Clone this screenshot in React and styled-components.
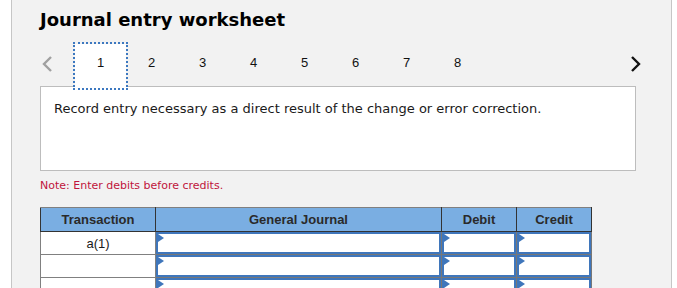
import React from 'react'
import styled, { createGlobalStyle } from 'styled-components'

const GlobalStyle = createGlobalStyle`
  body {
    margin: 0;
    background: #fff;
    overflow: hidden;
  }
`

const Panel = styled.div`
  margin-left: 11px;
  width: 661px;
  min-height: 100vh;
  background: #f2f2f2;
  border-left: 1px solid #c6c6c6;
  border-right: 1px solid #c6c6c6;
  padding: 9px 29px 0 28px;
  box-sizing: border-box;
  display: flex;
  flex-direction: column;
`

const Title = styled.h1`
  margin: 0;
  font-family: "DejaVu Sans", Verdana, sans-serif;
  font-size: 18px;
  line-height: 22px;
  font-weight: bold;
  color: #000;
`

const TabRow = styled.div`
  display: flex;
  align-items: center;
  height: 44px;
  margin-top: 13px;
  margin-bottom: -2px;
  position: relative;
  z-index: 1;
`

const Arrow = styled.div`
  width: 14px;
  height: 20px;
  display: flex;
  align-items: center;
  justify-content: center;
  margin-left: ${p => (p.$next ? 'auto' : '0')};
  margin-top: -4px;
`

const Tabs = styled.div`
  display: flex;
  margin-left: 21px;
  height: 100%;
`

const Tab = styled.div`
  width: 51px;
  height: 44px;
  box-sizing: border-box;
  display: flex;
  align-items: center;
  justify-content: center;
  padding-bottom: 7px;
  font-family: "Liberation Sans", Arial, sans-serif;
  font-size: 13px;
  color: #111;
  background: ${p => (p.$active ? '#fff' : 'transparent')};
  outline: ${p => (p.$active ? '2px dotted #3c78c0' : 'none')};
  outline-offset: 0;
`

const Prompt = styled.div`
  width: 596px;
  height: 85px;
  box-sizing: border-box;
  background: #fff;
  border: 1px solid #bdbdbd;
  padding: 14px 13px 0;
  font-family: "DejaVu Sans", Verdana, sans-serif;
  font-size: 13px;
  line-height: 16px;
  color: #1a1a1a;
`

const Note = styled.div`
  margin-top: 8px;
  font-family: "DejaVu Sans", Verdana, sans-serif;
  font-size: 11px;
  line-height: 14px;
  color: #c0143c;
`

const Table = styled.table`
  margin-top: 14px;
  width: 551px;
  border-collapse: collapse;
  table-layout: fixed;
  font-family: "Liberation Sans", Arial, sans-serif;
  font-size: 13px;
`

const Th = styled.th`
  width: ${p => p.$w}px;
  height: 23px;
  padding: 0;
  background: #7aaee2;
  color: #2a2a2a;
  font-weight: bold;
  border: 1px solid #333;
  border-top: 1px solid #808080;
`

const Td = styled.td`
  height: 21px;
  padding: 0;
  background: #fff;
  border: 1px solid #808080;
  text-align: center;
  color: #1a1a1a;
`

const InputTd = styled.td`
  padding: 0;
  border: 1px solid #777;
  background: #fff;
`

const InputBox = styled.div`
  position: relative;
  height: 18px;
  border: 2px solid #3f76bb;
  background: #fff;
`

const Marker = styled.span`
  position: absolute;
  left: 0;
  top: 0;
  width: 0;
  height: 0;
  border-top: 4px solid transparent;
  border-bottom: 4px solid transparent;
  border-left: 6px solid #3f76bb;
`

const Input = () => (
  <InputTd>
    <InputBox>
      <Marker />
    </InputBox>
  </InputTd>
)

const Chevron = ({ dir, color }) => (
  <svg width="11" height="18" viewBox="0 0 11 18">
    <polyline
      points={dir === 'left' ? '9,2 2,9 9,16' : '2,2 9,9 2,16'}
      fill="none"
      stroke={color}
      strokeWidth="2.4"
    />
  </svg>
)

const rows = ['a(1)', '', '', '']

export default function App() {
  return (
    <>
      <GlobalStyle />
      <Panel>
        <Title>Journal entry worksheet</Title>
        <TabRow>
          <Arrow>
            <Chevron dir="left" color="#a0a0a0" />
          </Arrow>
          <Tabs>
            {[1, 2, 3, 4, 5, 6, 7, 8].map(n => (
              <Tab key={n} $active={n === 1}>{n}</Tab>
            ))}
          </Tabs>
          <Arrow $next>
            <Chevron dir="right" color="#111" />
          </Arrow>
        </TabRow>
        <Prompt>
          Record entry necessary as a direct result of the change or error correction.
        </Prompt>
        <Note>Note: Enter debits before credits.</Note>
        <Table>
          <thead>
            <tr>
              <Th $w={114}>Transaction</Th>
              <Th $w={285}>General Journal</Th>
              <Th $w={74}>Debit</Th>
              <Th $w={74}>Credit</Th>
            </tr>
          </thead>
          <tbody>
            {rows.map((t, i) => (
              <tr key={i}>
                <Td>{t}</Td>
                <Input />
                <Input />
                <Input />
              </tr>
            ))}
          </tbody>
        </Table>
      </Panel>
    </>
  )
}
